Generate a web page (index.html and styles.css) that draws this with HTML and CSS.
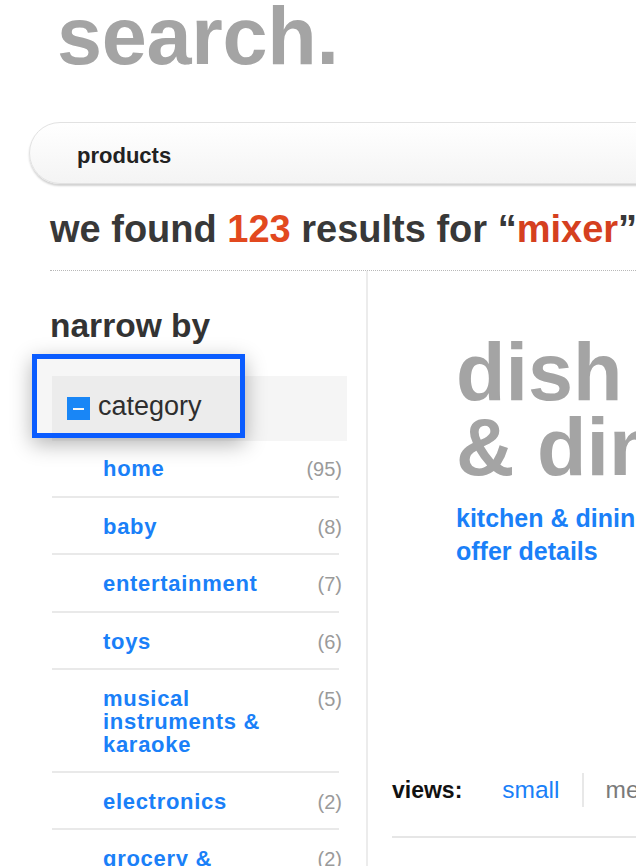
FILE: index.html
```html
<!DOCTYPE html>
<html lang="en">
<head>
<meta charset="utf-8">
<title>search.</title>
<link rel="stylesheet" href="styles.css">
</head>
<body>
<div class="page">
  <h1 class="title">search.</h1>
  <div class="searchbar"><span class="scope">products</span></div>
  <h2 class="summary">we found <span class="num">123</span> results for “<span class="term">mixer</span>”</h2>
  <div class="columns">
    <aside class="sidebar">
      <h3 class="narrow">narrow by</h3>
      <div class="facet">
        <div class="facet-head"><span class="toggle"></span><span>category</span></div>
        <ul class="facet-list">
          <li><a class="label" href="#">home</a><span class="count">(95)</span></li>
          <li><a class="label" href="#">baby</a><span class="count">(8)</span></li>
          <li><a class="label" href="#">entertainment</a><span class="count">(7)</span></li>
          <li><a class="label" href="#">toys</a><span class="count">(6)</span></li>
          <li><a class="label" href="#">musical instruments &amp; karaoke</a><span class="count">(5)</span></li>
          <li><a class="label" href="#">electronics</a><span class="count">(2)</span></li>
          <li><a class="label" href="#">grocery &amp; gourmet food</a><span class="count">(2)</span></li>
        </ul>
      </div>
      <div class="annot"></div>
    </aside>
    <main class="content">
      <div class="promo">
        <h2 class="promo-title">dish<br>&amp; dining</h2>
        <a class="promo-link" href="#">kitchen &amp; dining</a>
        <a class="promo-link" href="#">offer details</a>
      </div>
      <div class="views">
        <span class="views-label">views:</span>
        <a class="view-opt active" href="#">small</a>
        <a class="view-opt" href="#">medium</a>
      </div>
    </main>
  </div>
</div>
</body>
</html>
```
FILE: styles.css
```css
html, body {
  margin: 0;
  padding: 0;
  background: #ffffff;
  overflow: hidden;
}
body {
  font-family: "Liberation Sans", Arial, Helvetica, sans-serif;
  color: #333333;
  width: 636px;
  height: 866px;
}
a { text-decoration: none; }

.page {
  padding-left: 50px;
  width: 800px;
}

.title {
  margin: -4px 0 45px 7px;
  font-size: 81px;
  line-height: 81px;
  font-weight: bold;
  color: #a4a4a4;
  letter-spacing: -0.3px;
}

.searchbar {
  margin-left: -21px;
  width: 760px;
  height: 62px;
  box-sizing: border-box;
  border: 1px solid #e2e2e2;
  border-radius: 32px;
  background: linear-gradient(#ffffff, #f4f4f4);
  box-shadow: 0 2px 2px rgba(0,0,0,0.18);
  display: flex;
  align-items: center;
  padding-left: 47px;
  padding-top: 5px;
}
.scope {
  font-size: 22px;
  font-weight: bold;
  color: #222222;
}

.summary {
  margin: 23px 0 0 0;
  font-size: 38px;
  line-height: 44px;
  font-weight: bold;
  color: #383838;
  white-space: nowrap;
  padding-bottom: 19px;
  border-bottom: 1px dotted #b8b8b8;
}
.num { color: #e2491f; }
.term { color: #d5401f; }

.columns {
  display: flex;
  align-items: stretch;
  height: 600px;
}

.sidebar {
  position: relative;
  width: 316px;
  flex: none;
  border-right: 2px solid #ececec;
}
.narrow {
  margin: 35px 0 30px 0;
  font-size: 33.5px;
  line-height: 40px;
  font-weight: bold;
  color: #333333;
}

.facet {
  margin-left: 2px;
}
.facet-head {
  width: 295px;
  height: 65px;
  box-sizing: border-box;
  background: #f5f5f5;
  display: flex;
  align-items: flex-start;
  padding: 15px 0 0 15px;
  font-size: 27px;
  line-height: 30px;
  color: #303030;
}
.toggle {
  position: relative;
  width: 23px;
  height: 23px;
  margin: 6px 8px 0 0;
  background: #1a8bff;
  flex: none;
}
.toggle::after {
  content: "";
  position: absolute;
  left: 6px;
  top: 11px;
  width: 11px;
  height: 2px;
  background: #ffffff;
}

.facet-list {
  list-style: none;
  margin: 0;
  padding: 0;
  width: 287px;
}
.facet-list li {
  display: flex;
  justify-content: space-between;
  align-items: baseline;
  padding: 17px 0 14.5px 51px;
  border-bottom: 2px solid #e9e9e9;
}
.facet-list li:first-child {
  padding-top: 16px;
}
.label {
  max-width: 180px;
  font-size: 22px;
  line-height: 23px;
  font-weight: bold;
  letter-spacing: 0.7px;
  color: #1a80f8;
}
.count {
  margin-right: -3px;
  font-size: 20px;
  line-height: 23px;
  color: #9a9a9a;
}

.annot {
  position: absolute;
  left: -18px;
  top: 83px;
  width: 213px;
  height: 84px;
  box-sizing: border-box;
  border: 5px solid #0a5cff;
  background: rgba(0,0,0,0.035);
  box-shadow: 0 6px 20px rgba(0,0,0,0.3);
}

.content {
  flex: 1;
  min-width: 0;
}
.promo {
  padding-left: 88px;
  display: flex;
  flex-direction: column;
  align-items: flex-start;
}
.promo-title {
  margin: 64px 0 17px 0;
  font-size: 81px;
  line-height: 75px;
  font-weight: bold;
  color: #a4a4a4;
  white-space: nowrap;
}
.promo-link {
  font-size: 25px;
  line-height: 33px;
  font-weight: bold;
  color: #1a80f8;
  white-space: nowrap;
}

.views {
  margin: 205px 0 0 24px;
  display: flex;
  align-items: center;
  padding-bottom: 29px;
  border-bottom: 2px solid #e6e6e6;
  white-space: nowrap;
}
.views-label {
  font-size: 23px;
  line-height: 34px;
  font-weight: bold;
  color: #111111;
  margin-right: 40px;
}
.view-opt {
  font-size: 24.5px;
  line-height: 34px;
  color: #7a7a7a;
}
.view-opt.active {
  color: #1a80f8;
}
.view-opt + .view-opt {
  margin-left: 22px;
  padding-left: 22px;
  border-left: 2px solid #e8e8e8;
}
```
